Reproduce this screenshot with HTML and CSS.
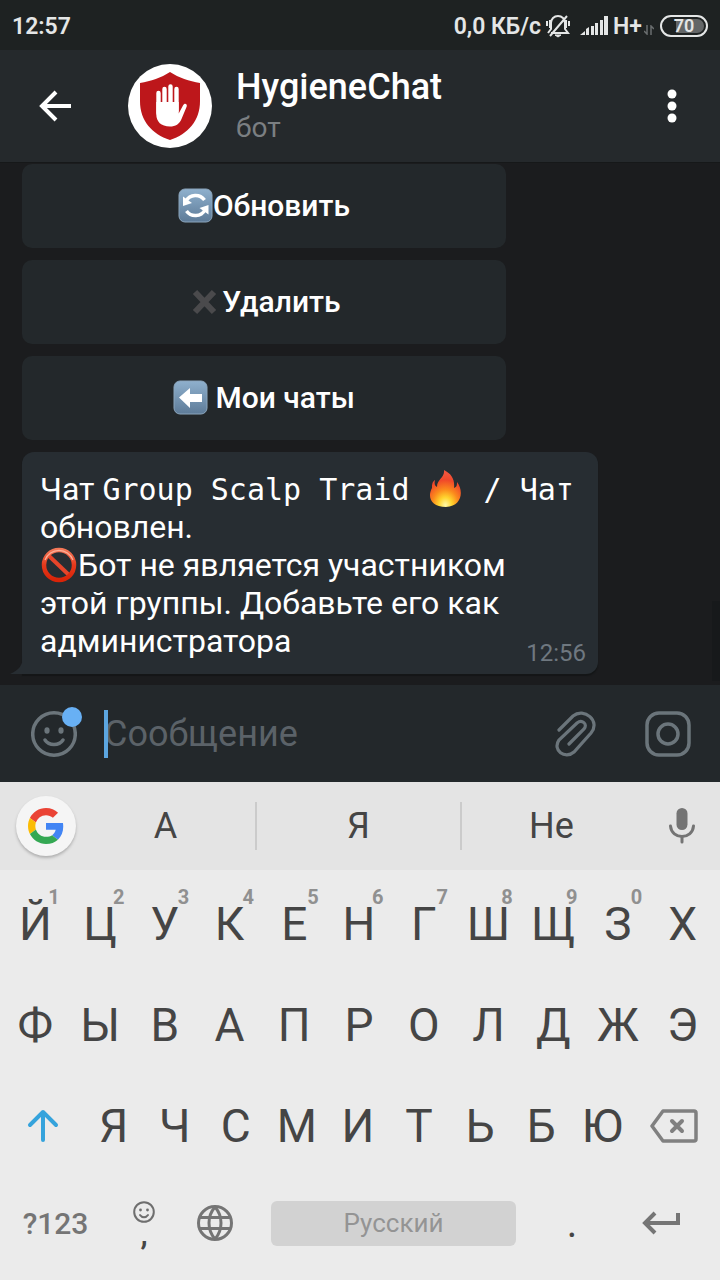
FILE: index.html
```html
<!DOCTYPE html>
<html lang="ru">
<head>
  <meta charset="UTF-8" />
  <meta name="viewport" content="width=device-width, initial-scale=1.0"/>
  <title>HygieneChat</title>
  <link rel="stylesheet" href="styles.css">
</head>
<body>
  <!-- Status bar -->
  <div class="status-bar">
    <span class="clock">12:57</span>
    <span>0,0 КБ/с</span>
    <svg class="bell" width="26" height="24" viewBox="0 0 26 24" fill="none" stroke="#e4e6e6" stroke-width="2">
      <path d="M6 19h17l-3-4V9c0-4-3-7-7-7S6 5 6 9v6l-3 4M5 22L22 2"/>
      <path d="M2 7v5M24 7v5M5 6v8M21 6v8"/>
      <path d="M10 21h6l-3 2z" fill="#e4e6e6" stroke-width="1"/>
    </svg>
    <svg class="signal" width="28" height="20" viewBox="0 0 28 20" fill="#e4e6e6">
      <path d="M0 19l5-4v4zM6 13l3-2v8H6zM11 10h3v9h-3zM15 7h3v12h-3zM20 4h3v15h-3zM24 0h4v19h-4z"/>
    </svg>
    <span>H+</span>
    <svg class="data" width="10" height="10" viewBox="0 0 10 10" fill="none" stroke="#6a6e6f" stroke-width="1.5">
      <path d="M3 0v9L0 6M7 10V1l3 3"/>
    </svg>
    <span class="battery">70</span>
  </div>

  <!-- Chat header -->
  <header class="header">
    <button class="icon-btn back" aria-label="Назад">
      <svg width="34" height="34" viewBox="0 0 34 34" fill="none" stroke="#fff" stroke-width="4">
        <path d="M33 17H5M18 3L4 17l14 14"/>
      </svg>
    </button>
    <svg class="avatar" width="84" height="84" viewBox="0 0 84 84">
      <circle cx="42" cy="42" r="42" fill="#fff"/>
      <path d="M42 8c9 6 19 9 30 11v18c0 20-12 33-30 39C24 70 12 57 12 37V19c11-2 21-5 30-11z" fill="#bd171b"/>
      <path d="M30.500 29v20M36.500 25v20M42.500 22.500v22M48.500 25v22" stroke="#fff" stroke-width="4.400" stroke-linecap="round"/>
      <path d="M28.300 38h22.400v11.500L55 41.500c1.500-3 4.500-1.500 3.700 1L53.500 55c-2 5-6 7.500-11.500 7.500-9 0-13.700-5-13.700-12z" fill="#fff"/>
    </svg>
    <div class="peer">
      <h1>HygieneChat</h1>
      <p>бот</p>
    </div>
    <button class="icon-btn more" aria-label="Меню">
      <svg width="12" height="36" viewBox="0 0 12 36" fill="#fff">
        <circle cx="6" cy="6" r="4.500"/><circle cx="6" cy="18" r="4.500"/><circle cx="6" cy="30" r="4.500"/>
      </svg>
    </button>
  </header>

  <!-- Messages -->
  <main class="chat">
    <button class="reply">
      <svg width="35" height="35" viewBox="0 0 35 35">
        <defs>
          <linearGradient id="blue" x1="0" y1="0" x2="0" y2="1">
            <stop offset="0" stop-color="#8fb0cd"/><stop offset="1" stop-color="#5d7b98"/>
          </linearGradient>
        </defs>
        <rect x="1" y="1" width="33" height="33" rx="6" fill="url(#blue)" stroke="#8ba5bc" stroke-width="1"/>
        <path d="M8 13a11 11 0 0 1 18.500-1M27 22a11 11 0 0 1-18.500 1" fill="none" stroke="#fff" stroke-width="3.500"/>
        <path d="M5 8.500v9.500l9-3zM30.500 26.500v-9.500l-9 3z" fill="#fff"/>
      </svg>Обновить
    </button>
    <button class="reply">
      <svg width="35" height="35" viewBox="0 0 35 35">
        <path d="M8 8L27 28M27 8L8 28" stroke="#4a4a4c" stroke-width="6"/>
      </svg>Удалить
    </button>
    <button class="reply">
      <svg width="35" height="35" viewBox="0 0 35 35">
        <rect x="1" y="1" width="33" height="33" rx="6" fill="url(#blue)" stroke="#8ba5bc" stroke-width="1"/>
        <path d="M6 17.500L17 8v6h12v8H17v6z" fill="#fff"/>
      </svg>&nbsp;Мои чаты
    </button>

    <div class="message">
      <svg class="tail" width="13" height="18" viewBox="0 0 13 18"><path d="M13 0c0 9-4 14-13 18h13z" fill="#272d32"/></svg>
      Чат <code>Group Scalp Traid <svg class="emoji" width="38" height="38" viewBox="0 0 38 38">
        <defs>
          <radialGradient id="fire" cx=".5" cy=".95" r=".85">
            <stop offset="0" stop-color="#fff9a8"/><stop offset=".25" stop-color="#ffd42e"/>
            <stop offset=".5" stop-color="#fb8a1c"/><stop offset=".8" stop-color="#f0482a"/>
            <stop offset="1" stop-color="#f2543c"/>
          </radialGradient>
        </defs>
        <path d="M16 0c8 4 11 10 10 18 3-1 3-3 3-6 7 9 5 24-11 25C3 37-1 27 4 18c0-3 0-6 3-8-1 4 0 6 2 7 0-8 8-9 7-17z" fill="url(#fire)"/>
      </svg> / Чат</code> обновлен.<br>
      <svg class="emoji" width="38" height="38" viewBox="0 0 38 38">
        <defs>
          <linearGradient id="ban" x1="0" y1="0" x2="0" y2="1">
            <stop offset="0" stop-color="#f47757"/><stop offset=".5" stop-color="#e5391c"/><stop offset="1" stop-color="#d92408"/>
          </linearGradient>
        </defs>
        <path d="M8 9L30 30" stroke="#e6452a" stroke-width="4"/>
        <circle cx="19" cy="19" r="15" fill="none" stroke="url(#ban)" stroke-width="4.500"/>
        <path d="M5 14a15 15 0 0 1 28 0" fill="none" stroke="#f9b09a" stroke-width="1.200"/>
      </svg>Бот не является участником<br>
      этой группы. Добавьте его как администратора<time>12:56</time>
    </div>
    <div class="scrollbar"></div>
  </main>

  <!-- Composer -->
  <form class="composer">
    <button type="button" class="icon-btn smile" aria-label="Эмодзи">
      <svg width="46" height="48" viewBox="0 0 46 48" fill="none" stroke="#6b757b" stroke-width="3.500" stroke-linecap="round">
        <circle cx="23" cy="24" r="21.300"/>
        <path d="M14 30c4 6 14 6 18 0"/>
        <ellipse cx="16" cy="20.500" rx="2.600" ry="3.200" fill="#6b757b" stroke="none"/>
        <ellipse cx="30" cy="20.500" rx="2.600" ry="3.200" fill="#6b757b" stroke="none"/>
      </svg>
      <span class="badge"></span>
    </button>
    <div class="field">
      <input type="text" placeholder="Сообщение" aria-label="Сообщение">
      <span class="caret"></span>
    </div>
    <button type="button" class="icon-btn" aria-label="Прикрепить">
      <svg width="42" height="48" viewBox="0 0 42 48" fill="none" stroke="#6b757b" stroke-width="3.200" stroke-linecap="round">
        <path d="M4 20L18 6c11-9 28 5 18 17L19 42C10 50-3 40 4 30L22 13c5-4 11 1 7 6L14 34"/>
      </svg>
    </button>
    <button type="button" class="icon-btn camera" aria-label="Камера">
      <svg width="46" height="46" viewBox="0 0 46 46" fill="none" stroke="#6b757b" stroke-width="3.500">
        <rect x="2" y="2" width="42" height="42" rx="12"/>
        <circle cx="23" cy="23" r="10"/>
      </svg>
    </button>
  </form>

  <!-- Keyboard -->
  <section class="keyboard">
    <div class="suggestions">
      <button class="google" aria-label="Google">
        <svg width="36" height="36" viewBox="0 0 48 48">
          <path fill="#ea4335" d="M24 9.500c3.540 0 6.710 1.220 9.210 3.600l6.850-6.850C35.900 2.380 30.470 0 24 0 14.620 0 6.510 5.380 2.560 13.220l7.980 6.190C12.430 13.720 17.740 9.500 24 9.500z"/>
          <path fill="#4285f4" d="M46.980 24.550c0-1.570-.15-3.090-.38-4.550H24v9.020h12.940c-.58 2.960-2.260 5.480-4.780 7.180l7.730 6c4.510-4.180 7.090-10.360 7.090-17.650z"/>
          <path fill="#fbbc05" d="M10.530 28.590c-.48-1.450-.76-2.990-.76-4.590s.27-3.140.76-4.590l-7.980-6.190C.92 16.460 0 20.120 0 24c0 3.880.92 7.540 2.560 10.780l7.970-6.190z"/>
          <path fill="#34a853" d="M24 48c6.480 0 11.930-2.130 15.890-5.810l-7.730-6c-2.150 1.450-4.920 2.300-8.160 2.300-6.260 0-11.570-4.220-13.470-9.910l-7.980 6.190C6.510 42.620 14.620 48 24 48z"/>
        </svg>
      </button>
      <button class="word">А</button>
      <button class="word wide">Я</button>
      <button class="word">Не</button>
      <button class="icon-btn mic" aria-label="Голосовой ввод">
        <svg width="26" height="36" viewBox="0 0 26 36" fill="none" stroke="#747474" stroke-width="3" stroke-linecap="round">
          <rect x="7.500" y="0" width="11" height="22" rx="5.500" fill="#747474" stroke="none"/>
          <path d="M1.500 18c1 14 22 14 23 0M13 29v5"/>
        </svg>
      </button>
    </div>

    <div class="row letters">
      <button>Й<sup>1</sup></button>
      <button>Ц<sup>2</sup></button>
      <button>У<sup>3</sup></button>
      <button>К<sup>4</sup></button>
      <button>Е<sup>5</sup></button>
      <button>Н<sup>6</sup></button>
      <button>Г<sup>7</sup></button>
      <button>Ш<sup>8</sup></button>
      <button>Щ<sup>9</sup></button>
      <button>З<sup>0</sup></button>
      <button>Х</button>
    </div>
    <div class="row letters">
      <button>Ф</button>
      <button>Ы</button>
      <button>В</button>
      <button>А</button>
      <button>П</button>
      <button>Р</button>
      <button>О</button>
      <button>Л</button>
      <button>Д</button>
      <button>Ж</button>
      <button>Э</button>
    </div>
    <div class="row shifted">
      <button aria-label="Shift">
        <svg width="32" height="34" viewBox="0 0 32 34" fill="none" stroke="#35a3dc" stroke-width="4" stroke-linecap="round" stroke-linejoin="round">
          <path d="M16 31V3M3 16L16 3l13 13"/>
        </svg>
      </button>
      <button>Я</button>
      <button>Ч</button>
      <button>С</button>
      <button>М</button>
      <button>И</button>
      <button>Т</button>
      <button>Ь</button>
      <button>Б</button>
      <button>Ю</button>
      <button aria-label="Удалить символ">
        <svg width="48" height="34" viewBox="0 0 48 34" fill="none" stroke="#808080" stroke-width="3.500" stroke-linejoin="round">
          <path d="M13 2h31q2 0 2 2v26q0 2-2 2H13L2 17z"/>
          <path d="M22 12l10 10M32 12L22 22" stroke-width="4" stroke-linecap="round"/>
        </svg>
      </button>
    </div>
    <div class="row bottom">
      <button class="symbols">?123</button>
      <button class="comma">
        <svg width="22" height="22" viewBox="0 0 22 22" fill="none" stroke="#6e6e6e" stroke-width="2" stroke-linecap="round">
          <circle cx="11" cy="11" r="9.800"/>
          <path d="M7 14c2 3 6 3 8 0"/>
          <circle cx="7.500" cy="9" r="1.400" fill="#6e6e6e" stroke="none"/><circle cx="14.500" cy="9" r="1.400" fill="#6e6e6e" stroke="none"/>
        </svg>
        <span>,</span>
      </button>
      <button aria-label="Язык">
        <svg width="36" height="36" viewBox="0 0 36 36" fill="none" stroke="#757575" stroke-width="3">
          <circle cx="18" cy="18" r="16.500"/>
          <path d="M3 12.500h30M3 23.500h30M18 2c-8 9-8 23 0 32M18 2c8 9 8 23 0 32"/>
        </svg>
      </button>
      <button class="space">Русский</button>
      <button class="dot">.</button>
      <button aria-label="Ввод">
        <svg width="38" height="24" viewBox="0 0 38 24" fill="none" stroke="#757575" stroke-width="4">
          <path d="M36 2v10H4M13 2L3 12l10 10"/>
        </svg>
      </button>
    </div>
  </section>
</body>
</html>
```
FILE: styles.css
```css
* {
  margin: 0;
  padding: 0;
  box-sizing: border-box;
}
body {
  display: flex;
  flex-direction: column;
  min-height: 100vh;
  font-family: Roboto, sans-serif;
  background: #1b1c1e;
  color: #fff;
}
button {
  background: none;
  border: none;
  font-family: inherit;
  color: inherit;
  cursor: pointer;
}
svg {
  flex-shrink: 0;
}
.icon-btn {
  display: flex;
  align-items: center;
  justify-content: center;
}

/* Status bar */
.status-bar {
  display: flex;
  align-items: center;
  height: 50px;
  padding: 2px 12px 0;
  background: #1e2222;
  color: #e4e6e6;
  font-size: 23px;
  font-weight: 600;
}
.clock {
  margin-right: auto;
}
.bell {
  margin: 0 9px 0 4px;
}
.signal {
  margin-right: 5px;
}
.data {
  margin: 8px 6px 0 2px;
}
.battery {
  width: 48px;
  height: 22px;
  border: 2px solid #e4e6e6;
  border-radius: 11px;
  background: linear-gradient(90deg, #1e2222 30%, #636667 30%) content-box;
  padding: 2px;
  font-size: 18px;
  line-height: 14px;
  text-align: center;
}

/* Header */
.header {
  display: flex;
  align-items: center;
  height: 113px;
  padding: 0 42px 0 38px;
  background: #25292c;
  border-bottom: 1px solid #161819;
}
.back {
  margin-right: 56px;
}
.peer {
  flex: 1;
  margin-left: 24px;
}
.peer h1 {
  font-size: 36px;
  font-weight: 500;
  line-height: 44px;
}
.peer p {
  color: #7b7f82;
  font-size: 28px;
  line-height: 38px;
}

/* Chat */
.chat {
  position: relative;
  flex: 1;
  display: flex;
  flex-direction: column;
  align-items: flex-start;
  gap: 12px;
  padding: 1px 122px 11px 22px;
}
.reply {
  display: flex;
  align-items: center;
  justify-content: center;
  width: 84%;
  height: 84px;
  padding-bottom: 2px;
  border-radius: 10px;
  background: #23282b;
  font-size: 30px;
  font-weight: 500;
}
.message {
  position: relative;
  width: 100%;
  padding: 18px 12px 14px 18px;
  border-radius: 12px 12px 12px 0;
  background: #272d32;
  box-shadow: 0 2px 1px #141617;
  font-size: 32px;
  line-height: 38px;
}
.message code {
  font-family: "DejaVu Sans Mono", monospace;
  font-size: 30px;
  line-height: 1;
}
.message time {
  float: right;
  margin: 12px 0 -12px;
  color: #6f7880;
  font-size: 24px;
}
.emoji {
  margin: -4px 0;
  vertical-align: -4px;
}
.tail {
  position: absolute;
  left: -12px;
  bottom: 0;
}
.scrollbar {
  position: absolute;
  right: 0;
  bottom: 4px;
  width: 8px;
  height: 80px;
  background: #17191b;
}

/* Composer */
.composer {
  display: flex;
  align-items: center;
  height: 97px;
  padding: 0 29px 0 31px;
  background: #23282b;
}
.smile {
  position: relative;
}
.badge {
  position: absolute;
  top: -3px;
  right: -5px;
  width: 20px;
  height: 20px;
  border-radius: 50%;
  background: #68b0f4;
}
.field {
  position: relative;
  flex: 1;
  margin-left: 27px;
}
.field input {
  display: block;
  width: 100%;
  height: 48px;
  border: none;
  outline: none;
  background: none;
  color: #fff;
  font-family: inherit;
  font-size: 36px;
}
.field input::placeholder {
  color: #5b6268;
}
.caret {
  position: absolute;
  top: 0;
  bottom: 0;
  left: 0;
  width: 4px;
  background: #5ca6e0;
}
.camera {
  margin-left: 48px;
}

/* Keyboard */
.keyboard {
  height: 498px;
  background: #ebebeb;
  color: #454545;
}
.suggestions {
  display: flex;
  align-items: center;
  height: 88px;
  margin-bottom: 3px;
  padding: 0 25px 0 16px;
  background: #e4e4e4;
}
.google {
  display: flex;
  align-items: center;
  justify-content: center;
  width: 60px;
  height: 60px;
  border-radius: 50%;
  background: #f5f5f5;
  box-shadow: 0 2px 3px #b0b0b0;
}
.word {
  flex: 180;
  height: 48px;
  font-size: 36px;
  line-height: 48px;
}
.word + .word {
  border-left: 2px solid #cbcbcb;
}
.wide {
  flex: 204;
}
.mic {
  margin-left: 28px;
}
.row {
  display: grid;
  height: 101px;
  padding: 0 5px 0 3px;
}
.row button {
  position: relative;
  display: flex;
  align-items: center;
  justify-content: center;
  font-size: 46px;
}
.row sup {
  position: absolute;
  top: 14px;
  right: 8px;
  color: #909090;
  font-size: 20px;
  font-weight: 700;
  line-height: 20px;
}
.letters {
  grid-template-columns: repeat(11, 1fr);
}
.shifted {
  grid-template-columns: 80fr repeat(9, 61fr) 82fr;
}
.bottom {
  grid-template-columns: 105fr 72fr 70fr 287fr 70fr 108fr;
  align-items: center;
  height: 94px;
}
.row .symbols {
  color: #757575;
  font-size: 30px;
  font-weight: 500;
}
.row .comma {
  flex-direction: column;
  font-size: 32px;
  font-weight: 500;
  line-height: 22px;
}
.row .space {
  height: 45px;
  margin: 0 21px;
  border-radius: 6px;
  background: #d2d2d2;
  color: #949494;
  font-size: 26px;
}
.row .dot {
  font-size: 40px;
}
```
